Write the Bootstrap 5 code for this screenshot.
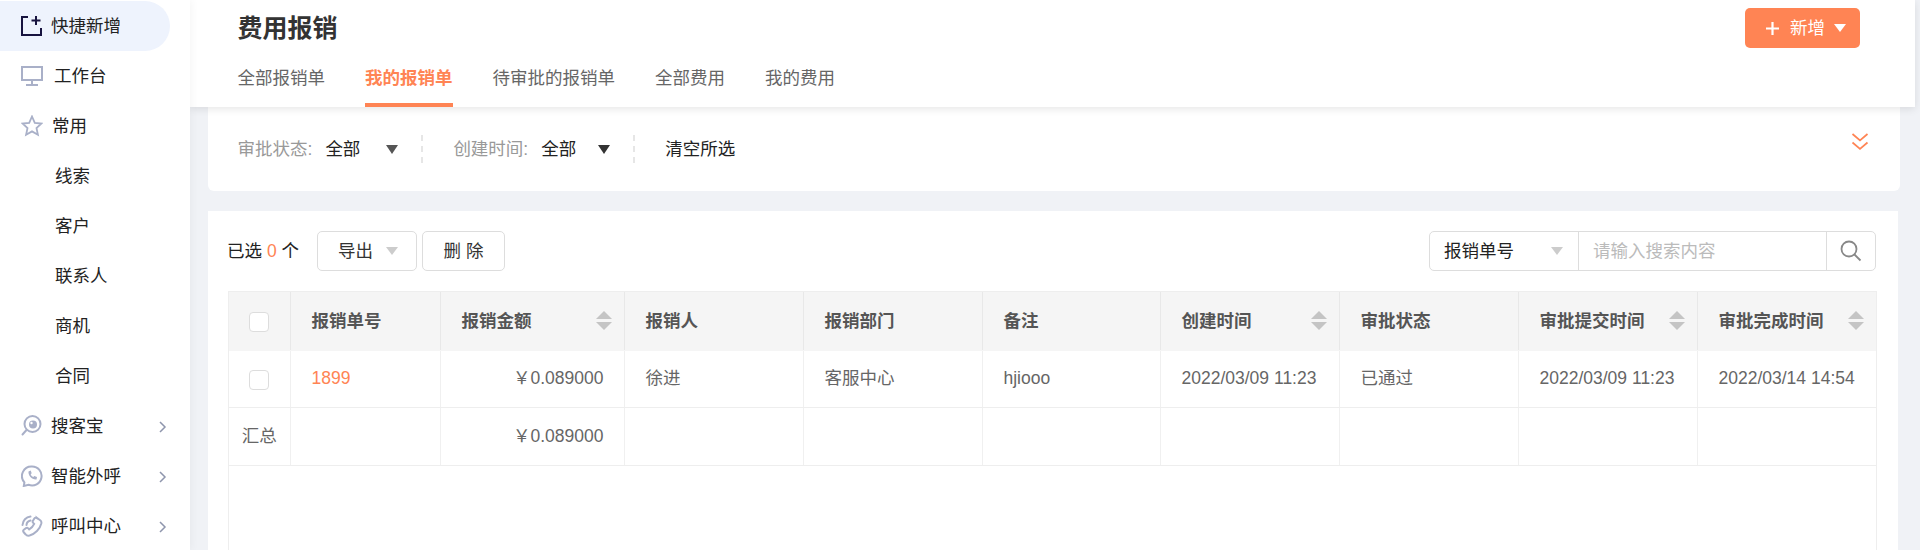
<!DOCTYPE html>
<html lang="zh-CN">
<head>
<meta charset="utf-8">
<title>费用报销</title>
<link href="https://cdn.jsdelivr.net/npm/bootstrap@5.3.0/dist/css/bootstrap.min.css" rel="stylesheet">
<style>
html,body{height:550px;overflow:hidden}
body{font-family:"Liberation Sans","Noto Sans CJK SC",sans-serif;font-size:17.5px;line-height:1.4;background:#f0f2f6;color:#222}
.shell{height:550px}
.side-panel{width:190px;flex:none;background:#fff;padding-top:1px;box-shadow:2px 0 8px rgba(0,0,0,.04);position:relative;z-index:3;overflow:hidden}
.side-item{height:50px;display:flex;align-items:center;color:#222;text-decoration:none;width:170px;padding-left:21px;position:relative;white-space:nowrap}
.side-item.on{background:#eef3fd;border-radius:0 25px 25px 0}
.side-ico{width:22px;height:22px;flex:none;margin-right:8px;color:#a9b0c8}
.t2{margin-left:3px}.t1{margin-left:1px}
.side-sub{padding-left:55px}
.side-arrow{position:absolute;left:158px;top:19px;width:9px;height:14px;color:#8f96ad}
.main-col{flex:1;min-width:0}
.page-head{height:107px;margin-right:5px;background:#fff;padding-left:47.5px;padding-right:55px;box-shadow:0 2px 8px rgba(0,0,0,.1);position:relative;z-index:2}
.head-top{height:56px}
.page-title{font-size:25px;font-weight:700;color:#333;margin:0;line-height:56px}
.add-btn{width:115px;height:40px;padding:0;background:#ff8454;border:0;border-radius:5px;color:#fff;font-size:17.5px;display:flex;align-items:center}
.add-btn:hover,.add-btn:active{background:#ff8454!important;color:#fff!important}
.tab-list{gap:40px}
.tab-link{display:block;padding:0 0 3px;line-height:44px;border-bottom:4px solid transparent;color:#666;text-decoration:none}
.tab-link.on{color:#ff8454;font-weight:700;border-bottom-color:#ff8454}
.filter-box{height:84px;margin:0 20px 20px 18px;background:#fff;border-radius:0 0 6px 6px;padding:28px 32px 0 29.500px}
.f-label{color:#999;margin-right:13px}
.f-val{color:#222}
.tri{width:0;height:0;border-left:6.5px solid transparent;border-right:6.5px solid transparent;border-top:9px solid #555;display:inline-block}
.tri-dark{border-top-color:#333}
.tri-light{border-top-color:#ccc;border-left-width:6px;border-right-width:6px;border-top-width:8px}
.tri-white{border-top-color:#fff;border-left-width:6px;border-right-width:6px;border-top-width:8px}
.f-sep{width:0;height:28px;border-left:2px dashed #e6e6e6}
.f-row{height:28px}
.table-box{height:339px;margin:0 22px 0 18px;background:#fff;padding:20px 21px 0 20px;display:flex;flex-direction:column}
.tool-row{height:40px;margin-bottom:20px}
.count-txt{width:89px;color:#222;margin-left:-1px;margin-right:1px}
.count-txt b{font-weight:400;color:#ff8454}
.ghost-btn{height:40px;border:1px solid #ddd;border-radius:5px;background:#fff;color:#333;font-size:17.5px;padding:0;display:flex;align-items:center}
.ghost-btn:hover,.ghost-btn:active{background:#fff!important;border-color:#ddd!important;color:#333!important}
.btn-exp{width:100px;padding-left:20px;margin-right:5px}
.btn-del{width:83px;justify-content:center}
.search-wrap{width:447px;height:40px;margin-right:1px;border:1px solid #ddd;border-radius:5px;display:flex;align-items:stretch;overflow:hidden}
.search-sel{width:149px;flex:none;border-right:1px solid #ddd;display:flex;align-items:center;padding-left:14px;color:#222}
.search-sel .tri{margin-left:37px}
.search-inp{flex:1;min-width:0;border:0;border-radius:0;padding:0 0 0 14px;font-size:17.5px;box-shadow:none!important}
.search-inp::placeholder{color:#bbb}
.search-btn{width:49px;flex:none;border-left:1px solid #ddd;display:flex;align-items:center;justify-content:center}
.grid-wrap{flex:1;border-left:1px solid #eee;border-right:1px solid #eee;border-top:1px solid #eee}
.data-grid{table-layout:fixed;width:1647px;margin:0;border-collapse:collapse;color:#666;--bs-table-color:#666}
.data-grid th,.data-grid td{padding:0 0 0 21px;border:0;border-right:1px solid #f0f0f0;border-bottom:1px solid #eee;vertical-align:middle;white-space:nowrap;box-shadow:none}
.data-grid tr>*:last-child{border-right:0}
.data-grid thead tr{height:58px}
.data-grid .row-a{height:57px}
.data-grid .row-b{height:58px}
.data-grid th{background:#f5f5f5;--bs-table-bg:#f5f5f5;font-weight:700;color:#555;border-right-color:#e8e8e8;border-bottom-color:#f5f5f5}
.data-grid .chk-cell{padding:0;text-align:center}
.data-grid .num-cell{text-align:right;padding:0 20px 0 0}
.th-flex{display:flex;align-items:center;justify-content:space-between;padding-right:12px}
.sort-ico{width:16px;height:19px;color:#c4c4c4;flex:none}
.form-check-input.row-chk{width:20px;height:20px;margin:0;border:1px solid #ddd;border-radius:4px;vertical-align:middle;float:none}
.c1{width:61px}.c2{width:150px}.c3{width:184px}.c4{width:179px}.c5{width:179px}.c6{width:178px}.c7{width:179px}.c8{width:179px}.c9{width:179px}.c10{width:179px}
.link-num{color:#ff8454;text-decoration:none}
</style>
</head>
<body>
<div class="d-flex shell">
  <nav class="side-panel">
    <a class="side-item on" href="#"><svg class="side-ico" style="color:#17133f" viewBox="0 0 22 22" fill="none" stroke="currentColor" stroke-width="2"><path d="M7 2H1v18h19v-7"/><path d="M15 1v9M10.500 5.500h9"/></svg><span>快捷新增</span></a>
    <a class="side-item" href="#"><svg class="side-ico" viewBox="0 0 22 22" fill="none" stroke="currentColor" stroke-width="2"><rect x="1" y="2" width="20" height="13"/><path d="M11 15v4M5 20h12"/></svg><span class="t2">工作台</span></a>
    <a class="side-item" href="#"><svg class="side-ico" viewBox="0 0 22 22" fill="none" stroke="currentColor" stroke-width="1.800"><path d="M11 1.500l2.800 6.300 6.700.7-5 4.600 1.400 6.700L11 16.400l-5.900 3.400 1.400-6.700-5-4.600 6.700-.7z"/></svg><span class="t1">常用</span></a>
    <a class="side-item side-sub" href="#">线索</a>
    <a class="side-item side-sub" href="#">客户</a>
    <a class="side-item side-sub" href="#">联系人</a>
    <a class="side-item side-sub" href="#">商机</a>
    <a class="side-item side-sub" href="#">合同</a>
    <a class="side-item" href="#"><svg class="side-ico" viewBox="0 0 22 22" fill="none" stroke="currentColor" stroke-width="2"><circle cx="11.500" cy="9" r="8"/><path d="M5.500 15l-4 4.500" stroke-linecap="round"/><circle cx="12" cy="9.500" r="4" fill="currentColor" stroke="none"/><circle cx="10.500" cy="8" r="1.200" fill="#fff" stroke="none"/></svg><span>搜客宝</span><svg class="side-arrow" viewBox="0 0 9 14" fill="none" stroke="currentColor" stroke-width="1.500"><path d="M2 2l5 5-5 5"/></svg></a>
    <a class="side-item" href="#"><svg class="side-ico" viewBox="0 0 22 22" fill="none" stroke="currentColor" stroke-width="2"><path d="M11 1.500a9.500 9.500 0 1 1-3.500 18.300L2.800 21l.6-3.700A9.500 9.500 0 0 1 11 1.500z"/><path d="M7.500 6.500c-.5 4 3.500 8.500 8 8l.5-2.500-2.700-1-1 1c-1.300-.6-2.100-1.500-2.600-2.800l1-1-1-2.700z" fill="currentColor" stroke="none"/></svg><span>智能外呼</span><svg class="side-arrow" viewBox="0 0 9 14" fill="none" stroke="currentColor" stroke-width="1.500"><path d="M2 2l5 5-5 5"/></svg></a>
    <a class="side-item" href="#"><svg class="side-ico" viewBox="0 0 22 22" fill="none" stroke="currentColor" stroke-width="2" stroke-linecap="round"><path d="M1.500 10a9 9 0 0 1 8-8.500"/><path d="M5.500 10a5 5 0 0 1 4-4.500"/><path d="M15.500 2.500l4 3c1 .8 1 2 .8 3C19 14 14 19 8.500 20.500c-1.500.3-3 0-3.800-1L2.500 17c-.6-.8-.4-1.800.3-2.300l2.200-1.500c.7-.5 1.600-.4 2.200.2l1 1c2.200-1.200 4-3.300 5-5.500l-1-1c-.6-.6-.7-1.500-.2-2.200l1.300-2.200c.5-.7 1.500-.9 2.200-.5z"/></svg><span>呼叫中心</span><svg class="side-arrow" viewBox="0 0 9 14" fill="none" stroke="currentColor" stroke-width="1.500"><path d="M2 2l5 5-5 5"/></svg></a>
  </nav>
  <main class="main-col">
    <header class="page-head">
      <div class="head-top d-flex justify-content-between align-items-center">
        <h1 class="page-title">费用报销</h1>
        <button type="button" class="btn add-btn">
          <svg width="13" height="13" viewBox="0 0 13 13" style="margin-left:21px" fill="none" stroke="#fff" stroke-width="2.200"><path d="M6.500 0v13M0 6.500h13"/></svg>
          <span style="margin-left:11px">新增</span>
          <span class="tri tri-white" style="margin-left:9px"></span>
        </button>
      </div>
      <ul class="nav tab-list">
        <li><a class="tab-link" href="#">全部报销单</a></li>
        <li><a class="tab-link on" href="#">我的报销单</a></li>
        <li><a class="tab-link" href="#">待审批的报销单</a></li>
        <li><a class="tab-link" href="#">全部费用</a></li>
        <li><a class="tab-link" href="#">我的费用</a></li>
      </ul>
    </header>
    <section class="filter-box d-flex justify-content-between">
      <div class="d-flex align-items-center f-row">
        <span class="f-label">审批状态:</span><span class="f-val">全部</span><span class="tri" style="margin-left:26px"></span>
        <span class="f-sep" style="margin-left:23px"></span>
        <span class="f-label" style="margin-left:30px">创建时间:</span><span class="f-val">全部</span><span class="tri tri-dark" style="margin-left:22px"></span>
        <span class="f-sep" style="margin-left:23px"></span>
        <span class="f-val" style="margin-left:30px">清空所选</span>
      </div>
      <svg width="18" height="18" viewBox="0 0 18 18" fill="none" stroke="#ff8454" stroke-width="1.700" style="margin-top:-2px;margin-right:-1px"><path d="M1.500 1l7.500 6.500L16.500 1M1.500 9.500L9 16l7.500-6.500"/></svg>
    </section>
    <section class="table-box">
      <div class="tool-row d-flex align-items-center">
        <span class="count-txt">已选 <b>0</b> 个</span>
        <button type="button" class="btn ghost-btn btn-exp">导出<span class="tri tri-light" style="margin-left:13px"></span></button>
        <button type="button" class="btn ghost-btn btn-del">删 除</button>
        <div class="search-wrap ms-auto">
          <div class="search-sel">报销单号<span class="tri tri-light"></span></div>
          <input class="form-control search-inp" placeholder="请输入搜索内容">
          <div class="search-btn"><svg width="22" height="22" viewBox="0 0 22 22" fill="none" stroke="#888" stroke-width="1.800"><circle cx="9" cy="9" r="7.500"/><path d="M14.500 14.500l6 6"/></svg></div>
        </div>
      </div>
      <div class="grid-wrap">
        <table class="table data-grid">
          <colgroup><col class="c1"><col class="c2"><col class="c3"><col class="c4"><col class="c5"><col class="c6"><col class="c7"><col class="c8"><col class="c9"><col class="c10"></colgroup>
          <thead>
            <tr>
              <th class="chk-cell"><input class="form-check-input row-chk" type="checkbox"></th>
              <th>报销单号</th>
              <th><div class="th-flex">报销金额<svg class="sort-ico" viewBox="0 0 16 19" fill="currentColor"><path d="M8 0l8 8H0zM0 11h16l-8 8z"/></svg></div></th>
              <th>报销人</th>
              <th>报销部门</th>
              <th>备注</th>
              <th><div class="th-flex">创建时间<svg class="sort-ico" viewBox="0 0 16 19" fill="currentColor"><path d="M8 0l8 8H0zM0 11h16l-8 8z"/></svg></div></th>
              <th>审批状态</th>
              <th><div class="th-flex">审批提交时间<svg class="sort-ico" viewBox="0 0 16 19" fill="currentColor"><path d="M8 0l8 8H0zM0 11h16l-8 8z"/></svg></div></th>
              <th><div class="th-flex">审批完成时间<svg class="sort-ico" viewBox="0 0 16 19" fill="currentColor"><path d="M8 0l8 8H0zM0 11h16l-8 8z"/></svg></div></th>
            </tr>
          </thead>
          <tbody>
            <tr class="row-a">
              <td class="chk-cell"><input class="form-check-input row-chk" type="checkbox"></td>
              <td><a class="link-num" href="#">1899</a></td>
              <td class="num-cell">￥0.089000</td>
              <td>徐进</td>
              <td>客服中心</td>
              <td>hjiooo</td>
              <td>2022/03/09 11:23</td>
              <td>已通过</td>
              <td>2022/03/09 11:23</td>
              <td>2022/03/14 14:54</td>
            </tr>
            <tr class="row-b">
              <td class="chk-cell">汇总</td>
              <td></td>
              <td class="num-cell">￥0.089000</td>
              <td></td><td></td><td></td><td></td><td></td><td></td><td></td>
            </tr>
          </tbody>
        </table>
      </div>
    </section>
  </main>
</div>
<script src="https://cdn.jsdelivr.net/npm/bootstrap@5.3.0/dist/js/bootstrap.bundle.min.js"></script>
</body>
</html>
